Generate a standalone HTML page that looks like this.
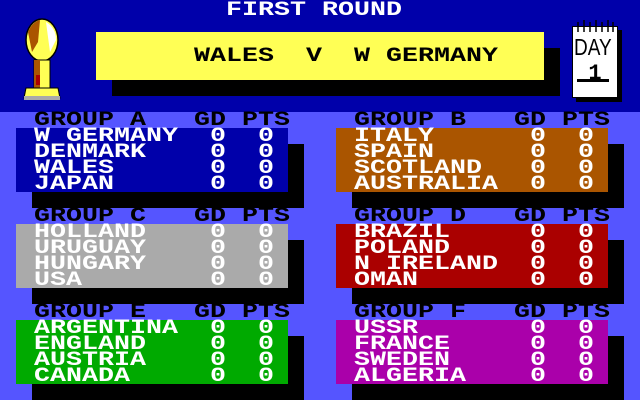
<!DOCTYPE html>
<html><head><style>
*{margin:0;padding:0}
body{width:640px;height:400px;overflow:hidden;background:#5555ff;position:relative;font-family:"Liberation Mono",monospace}
.a{position:absolute}
.t{position:absolute;font-weight:bold;font-size:20px;line-height:16px;white-space:pre;transform:scaleX(1.333);transform-origin:0 0;letter-spacing:0}
.w{color:#fff}.k{color:#000}
</style></head><body>
<div class="a" style="left:0;top:0;width:640px;height:112px;background:#0000aa"></div>
<div class="t w" style="left:226px;top:3px">FIRST ROUND</div>
<div class="a" style="left:112px;top:48px;width:448px;height:48px;background:#000"></div>
<div class="a" style="left:96px;top:32px;width:448px;height:48px;background:#ffff55"></div>
<div class="t k" style="left:194px;top:49px">WALES  V  W GERMANY</div>
<!-- trophy -->
<svg class="a" style="left:-6px;top:0" width="90" height="112">
<ellipse cx="48" cy="40" rx="16" ry="21" fill="#ffff55" stroke="#000" stroke-width="1.5"/>
<path d="M34 32 Q38 22 46 20 L44 42 L38 52 Z" fill="#aa5500"/>
<path d="M52 22 Q62 28 62 40 L56 52 Z" fill="#fff"/>
<path d="M40 60 L56 60 L56 88 L40 88 Z" fill="#ffff55" stroke="#000"/>
<rect x="40" y="60" width="6" height="28" fill="#aa5500"/>
<rect x="42" y="75" width="4" height="10" fill="#aa0000"/>
<path d="M32 88 L64 88 L66 98 L30 98 Z" fill="#ffff55" stroke="#000"/>
<rect x="30" y="96" width="36" height="4" fill="#aaa"/>
</svg>
<!-- calendar -->
<div class="a" style="left:576px;top:30px;width:46px;height:72px;background:#000"></div>
<div class="a" style="left:572px;top:26px;width:46px;height:72px;background:#fff;border:1px solid #000;box-sizing:border-box"></div>
<svg class="a" style="left:572px;top:18px" width="46" height="14"><path d="M6 4v10M12 2v12M18 4v10M24 2v12M30 4v10M36 2v12M41 4v10" stroke="#000" stroke-width="1.5"/></svg>
<div class="a" style="left:574px;top:38px;font-family:'Liberation Sans',sans-serif;font-size:19px;color:#000;line-height:22px;transform:scaleY(1.2)">DAY</div>
<div class="a" style="left:580px;top:61px;width:30px;height:18px;font-weight:bold;font-size:22px;color:#000;text-align:center">1</div>
<div class="a" style="left:577px;top:79px;width:32px;height:3px;background:#000"></div>

<!-- groups -->
<div class="a" style="left:32px;top:144px;width:272px;height:64px;background:#000"></div>
<div class="a" style="left:16px;top:128px;width:272px;height:64px;background:#0000aa"></div>
<div class="a" style="left:352px;top:144px;width:272px;height:64px;background:#000"></div>
<div class="a" style="left:336px;top:128px;width:272px;height:64px;background:#aa5500"></div>
<div class="a" style="left:32px;top:240px;width:272px;height:64px;background:#000"></div>
<div class="a" style="left:16px;top:224px;width:272px;height:64px;background:#aaaaaa"></div>
<div class="a" style="left:352px;top:240px;width:272px;height:64px;background:#000"></div>
<div class="a" style="left:336px;top:224px;width:272px;height:64px;background:#aa0000"></div>
<div class="a" style="left:32px;top:336px;width:272px;height:64px;background:#000"></div>
<div class="a" style="left:16px;top:320px;width:272px;height:64px;background:#00aa00"></div>
<div class="a" style="left:352px;top:336px;width:272px;height:64px;background:#000"></div>
<div class="a" style="left:336px;top:320px;width:272px;height:64px;background:#aa00aa"></div>

<div class="t k" style="left:34px;top:113px">GROUP A   GD PTS</div>
<div class="t w" style="left:34px;top:129px">W GERMANY  0  0
DENMARK    0  0
WALES      0  0
JAPAN      0  0</div>
<div class="t k" style="left:354px;top:113px">GROUP B   GD PTS</div>
<div class="t w" style="left:354px;top:129px">ITALY      0  0
SPAIN      0  0
SCOTLAND   0  0
AUSTRALIA  0  0</div>
<div class="t k" style="left:34px;top:209px">GROUP C   GD PTS</div>
<div class="t w" style="left:34px;top:225px">HOLLAND    0  0
URUGUAY    0  0
HUNGARY    0  0
USA        0  0</div>
<div class="t k" style="left:354px;top:209px">GROUP D   GD PTS</div>
<div class="t w" style="left:354px;top:225px">BRAZIL     0  0
POLAND     0  0
N IRELAND  0  0
OMAN       0  0</div>
<div class="t k" style="left:34px;top:305px">GROUP E   GD PTS</div>
<div class="t w" style="left:34px;top:321px">ARGENTINA  0  0
ENGLAND    0  0
AUSTRIA    0  0
CANADA     0  0</div>
<div class="t k" style="left:354px;top:305px">GROUP F   GD PTS</div>
<div class="t w" style="left:354px;top:321px">USSR       0  0
FRANCE     0  0
SWEDEN     0  0
ALGERIA    0  0</div>
</body></html>
